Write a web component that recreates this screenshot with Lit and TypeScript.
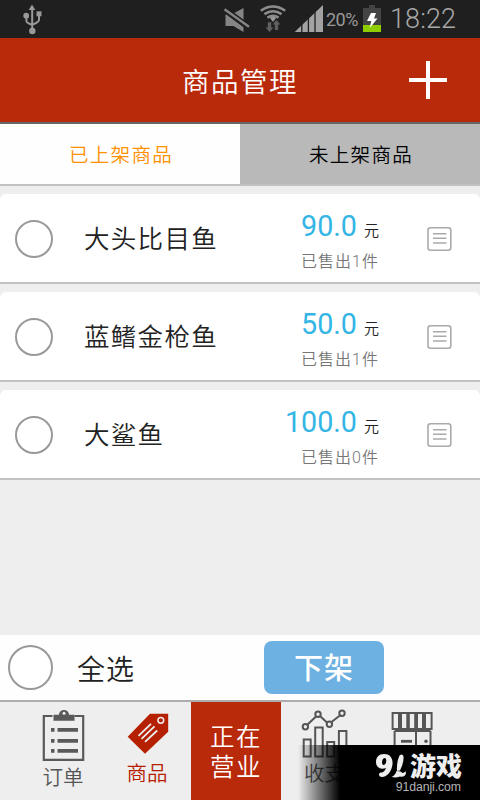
import { LitElement, html, css, svg } from "lit";
import { customElement, property } from "lit/decorators.js";

const FONT = css`"Roboto", "Noto Sans CJK SC", sans-serif`;

@customElement("status-bar")
class StatusBar extends LitElement {
  static styles = css`
    :host { display: flex; height: 38px; background: #1f1f1f; color: #999; font-family: ${FONT}; }
    svg { display: block; flex: none; }
    .usb { width: 222px; }
    .signal { width: 104px; }
    .percent { width: 36px; font-size: 18px; line-height: 40px; font-weight: 400; letter-spacing: -0.5px; white-space: nowrap; }
    .battery { width: 28px; }
    .clock { font-size: 27px; line-height: 39px; font-weight: 300; color: #a8a8a8; white-space: nowrap; letter-spacing: 0.1px; }
  `;
  render() {
    return html`
      <svg class="usb" viewBox="0 0 222 38" height="38" fill="#999" stroke="none">
        <path d="M32 4.500l3.300 5.500h-6.600z" /><circle cx="32.300" cy="31" r="3.200" /><circle cx="26.200" cy="15.700" r="2.900" /><path d="M36.500 11.300h5v5h-5z" />
        <path d="M32.200 8v22M26.400 16v5q0 2 5.800 3.800M39 15v5q0 2-6.500 4.700" fill="none" stroke="#999" stroke-width="2" />
      </svg>
      <svg class="signal" viewBox="222 0 104 38" height="38" fill="#858585">
        <path d="M225.500 14.500h6l12-6.500v24l-10-6h-8z" />
        <path d="M224 9l25 18.500" stroke="#1f1f1f" stroke-width="6" /><path d="M224.500 9.200l24.500 17.600" stroke="#858585" stroke-width="2.300" />
        <path d="M273 22l-3.300-4.200q3.300-2.300 6.600 0z" fill="#999" />
        <g fill="none" stroke="#8c8c8c" stroke-width="2.500"><path d="M260.800 10.700q12.200-8.400 24.400 0M264.400 14.100q8.600-5.600 17.200 0M267.400 17.600q5.600-3.600 11.200 0" /></g>
        <g fill="#606060"><path d="M267.800 22.300h3.400v5.200h2.200l-3.900 4.500-3.900-4.500h2.200z" /><path d="M274.800 30h3.400v-5.500h2.200l-3.900-4.600-3.900 4.600h2.200z" /></g>
        <path d="M294.700 32L323 5v27z" fill="#a2a2a2" />
        <path d="M301.800 20v12M308.400 14v18M315 8v24" stroke="#1f1f1f" stroke-width="1.300" />
      </svg>
      <span class="percent">20%</span>
      <svg class="battery" viewBox="362 0 28 38" height="38">
        <path d="M363 8h6V5h6v3h6v24h-18z" fill="#444" /><path d="M363 25h18v7h-18z" fill="#90cd00" />
        <path d="M371 13h5l-2 5.500h3.500L369.700 28l1.600-7H367z" fill="#fff" />
      </svg>
      <span class="clock">18:22</span>`;
  }
}

@customElement("product-card")
class ProductCard extends LitElement {
  @property() name = "";
  @property() price = "";
  @property() sold = "";
  static styles = css`
    :host { display: flex; box-sizing: border-box; height: 90px; background: #fff; border-bottom: 2px solid #c2c2c2; border-radius: 6px 6px 0 0; font-family: ${FONT}; font-weight: 350; }
    .ring { box-sizing: border-box; flex: none; width: 38px; height: 38px; margin: 26px 31px 0 15px; border: 2px solid #999; border-radius: 50%; }
    .name { width: 154px; padding-top: 26px; font-size: 25.5px; line-height: 38px; letter-spacing: 1.3px; color: #222; white-space: nowrap; }
    .info { width: 141px; text-align: right; }
    .line { display: flex; justify-content: flex-end; align-items: baseline; height: 40px; padding-top: 12px; }
    .price { font-size: 28.7px; line-height: 40px; font-weight: 400; color: #33b5e5; }
    .unit { margin-left: 7px; font-size: 15px; color: #222; }
    .sold { font-size: 16px; line-height: 24px; margin-top: 4px; letter-spacing: 1px; color: #777; }
    svg { margin: 32px 0 0 47px; }
  `;
  render() {
    return html`<span class="ring"></span><span class="name">${this.name}</span>
      <div class="info">
        <div class="line"><span class="price">${this.price}</span><span class="unit">元</span></div>
        <div class="sold">已售出${this.sold}件</div>
      </div>
      <svg width="27" height="27" fill="none" stroke="#aaa" stroke-width="1.600">
        <rect x="2" y="1.800" width="22.800" height="22.400" rx="2.500" /><path d="M7 7.700h13.500M7 12.300h13.500M7 17h13.500" />
      </svg>`;
  }
}

const icons = {
  orders: svg`<g fill="#595959"><path d="M31.500 16H22.800V59.800H62.200V16H53.500" fill="none" stroke="#595959" stroke-width="2.200" />
    <path d="M32.500 14.700h5.500c0-6.400 10-6.400 10 0h5.500v6h-21z" /><circle cx="43" cy="13.300" r="1.500" fill="#eee" />
    <path d="M30 28h3.500v3.700h-3.500zM36.500 28h20.500v3.700h-20.500zM30 39h3.500v3.700h-3.500zM36.500 39h20.500v3.700h-20.500zM30 49h3.500v3.700h-3.500zM36.500 49h20.500v3.700h-20.500z" /></g>`,
  goods: svg`<path d="M44.500 13.700h18.200v18L39.500 53.700 22.200 36.700z" fill="#b42000" /><circle cx="55.300" cy="20.300" r="2.900" fill="none" stroke="#eee" stroke-width="1.500" />
    <path d="M33 35.800L45.500 23.800M36 38.800L49 26.300M39.500 41.800L51.700 30.500" stroke="#eee" stroke-width="1.800" />`,
  finance: svg`<g fill="none" stroke="#555" stroke-width="2"><path d="M24.300 24.800l8.700-8.300M37 16l7 6.500M48.500 22l9-7" />
    <circle cx="22.400" cy="26.800" r="2.700" /><circle cx="35" cy="14.300" r="2.700" /><circle cx="46.400" cy="24.300" r="2.700" /><circle cx="59" cy="13.300" r="2.700" />
    <path d="M20.700 39.500h7v17h-7zM32.200 27.500h7.500v29h-7.500zM44.200 42h7v14.500h-7zM55.900 31h7.500v25.500h-7.500z" /></g>`,
  shop: svg`<g fill="none" stroke="#555" stroke-width="2"><path d="M21.600 13h39v16h-39zM28 13v16M30 13v16M36.300 13v16M37.800 13v16M44.200 13v16M46 13v16M52 13v16M54 13v16M23.600 31v30M59.500 31v30M45 30v30M23.600 31h36" /><path d="M30 41.300h11" stroke-width="2.800" /></g><circle cx="55" cy="41.300" r="1.700" fill="#555" />`,
};

@customElement("bottom-nav")
class BottomNav extends LitElement {
  static styles = css`
    :host { display: grid; grid-template-columns: 84px 86px 90px 88px 88px; box-sizing: border-box; height: 100px; padding-left: 21px; border-top: 2px solid #adadad; background: #eee; font-family: ${FONT}; font-weight: 350; overflow: hidden; }
    .item { display: flex; flex-direction: column; align-items: center; font-size: 20.5px; line-height: 24px; color: #555; }
    .item svg { flex: none; width: 84px; height: 62px; display: block; }
    .item span { margin-top: 2px; }
    .item.goods { color: #b42000; }
    .item.goods span { margin-top: -2px; margin-right: 2px; }
    .item.finance span { margin-top: -2px; margin-right: 1px; }
    .open { display: flex; flex-direction: column; justify-content: center; align-items: center; background: #b92a0b; color: #fff; font-size: 24.5px; line-height: 30px; letter-spacing: 1.5px; padding-top: 4px; }
  `;
  render() {
    return html`
      <div class="item"><svg viewBox="0 2 84 62">${icons.orders}</svg><span>订单</span></div>
      <div class="item goods"><svg viewBox="0.500 2 84 62">${icons.goods}</svg><span>商品</span></div>
      <div class="open"><span>正在</span><span>营业</span></div>
      <div class="item finance"><svg viewBox="0 2 84 62">${icons.finance}</svg><span>收支</span></div>
      <div class="item"><svg viewBox="0 2 84 62">${icons.shop}</svg></div>`;
  }
}

@customElement("site-mark")
class SiteMark extends LitElement {
  static styles = css`
    :host { display: flex; flex-direction: column; align-items: flex-end; box-sizing: border-box; width: 182px; height: 55px; padding: 7px 18px 0 0; background: linear-gradient(90deg, transparent, #000 42px); color: #eee; }
    .brand { display: flex; height: 28px; }
    .brand svg { display: block; width: 36px; height: 28px; }
    .title { font: 900 26px/26px "Noto Sans CJK SC", sans-serif; }
    .host { font: 12.3px/14px "Liberation Sans", sans-serif; color: #b5b5b5; letter-spacing: -0.1px; margin-right: 1px; }
  `;
  render() {
    return html`<div class="brand">
        <svg viewBox="373 752 36 28" fill="#eee">
          <path fill-rule="evenodd" d="M383 754C389 754 392 758 391.500 764C391 771 386 777 381 777C377.500 777 377 773.500 379.500 772.500C382 773 384 771 385 768C379 770 375 767 375 762C375 757 378 754 383 754ZM383.500 758C381 758 380 764.500 382.500 765C385.500 765 386.500 758 383.500 758Z" />
          <path d="M398.500 755.500q3-2.500 4 1q.5 6-3.500 14l-3 .5q-.500-9 2.500-15.500z" /><path d="M395.500 771l4 .5 2 1.500q2 0 3-2l.5 2.500q-1.500 4-6 3-4 1.500-8.500.5 4-2 5-6z" />
        </svg><span class="title">游戏</span></div>
      <span class="host">91danji.com</span>`;
  }
}

@customElement("app-root")
class AppRoot extends LitElement {
  static styles = css`
    :host { display: flex; flex-direction: column; position: relative; width: 480px; height: 800px; overflow: hidden; background: #eee; font-family: ${FONT}; font-weight: 350; }
    header { display: grid; grid-template-columns: 103px 1fr 103px; box-sizing: border-box; height: 86px; border-bottom: 2px solid #666; background: #b92a0b; color: #fff; }
    h1 { grid-column: 2; margin: 0; text-align: center; font-size: 27.5px; line-height: 89px; height: 84px; font-weight: 350; letter-spacing: 1.5px; }
    .tabs { display: grid; grid-template-columns: 1fr 1fr; box-sizing: border-box; height: 62px; border-bottom: 2px solid #c2c2c2; font-size: 19.5px; letter-spacing: 1.3px; text-align: center; }
    .tab { height: 60px; line-height: 64px; background: #b9b9b9; color: #000; text-indent: 2px; }
    .tab.active { background: #fefefe; color: #ff9000; }
    main { flex: 1; display: flex; flex-direction: column; gap: 8px; padding-top: 8px; }
    .actions { display: flex; height: 65px; background: #fefefe; }
    .ring { box-sizing: border-box; width: 45px; height: 45px; margin: 10px 24px 0 8px; border: 2px solid #999; border-radius: 50%; background: #fff; }
    .all { width: 187px; font-size: 28px; line-height: 71px; height: 65px; letter-spacing: 1px; color: #222; }
    button { width: 120px; height: 53px; margin-top: 6px; padding: 4px 0 0; border: 0; border-radius: 8px; background: #6cb1e1; color: #fff; font: 500 29px/49px ${FONT}; letter-spacing: 1px; }
    site-mark { position: absolute; right: 0; bottom: 0; }
  `;
  render() {
    return html`
      <status-bar></status-bar>
      <header><h1>商品管理</h1>
        <svg width="103" height="84" stroke="#fff" stroke-width="4"><path d="M32 42h38M51 23v38" /></svg>
      </header>
      <div class="tabs"><div class="tab active">已上架商品</div><div class="tab">未上架商品</div></div>
      <main>
        <product-card name="大头比目鱼" price="90.0" sold="1"></product-card>
        <product-card name="蓝鳍金枪鱼" price="50.0" sold="1"></product-card>
        <product-card name="大鲨鱼" price="100.0" sold="0"></product-card>
      </main>
      <div class="actions"><span class="ring"></span><span class="all">全选</span><button>下架</button></div>
      <bottom-nav></bottom-nav>
      <site-mark></site-mark>`;
  }
}
